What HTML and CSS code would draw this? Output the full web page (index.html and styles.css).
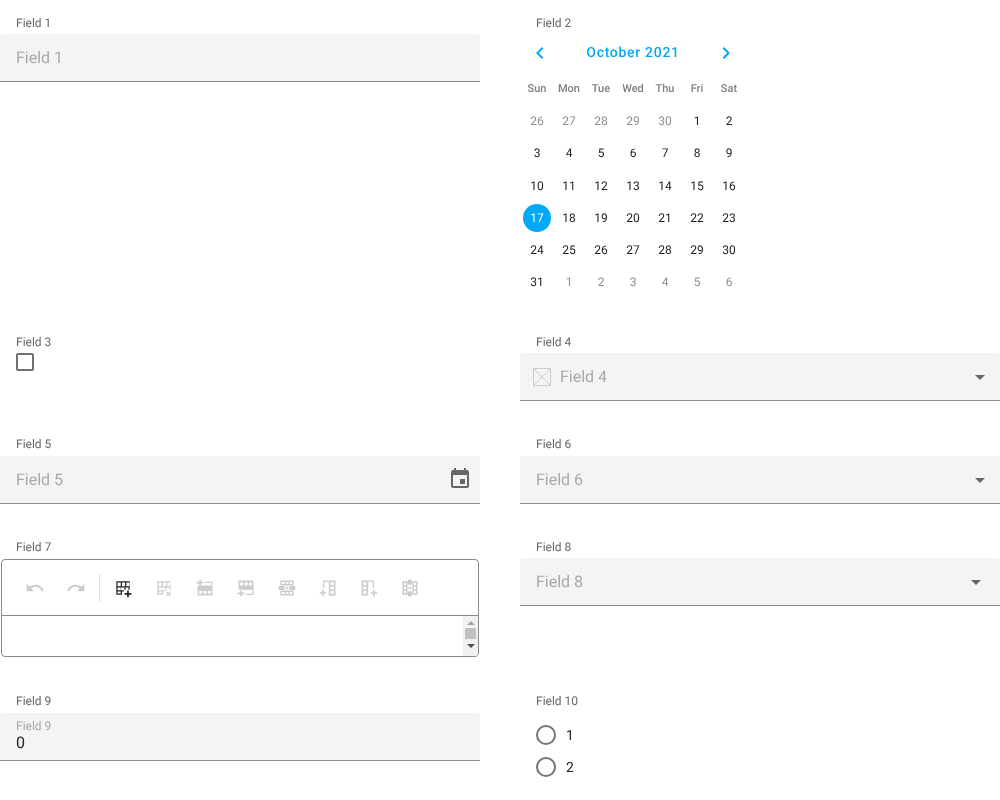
FILE: index.html
```html
<!DOCTYPE html>
<html lang="en">
<head>
  <meta charset="UTF-8">
  <title>Form</title>
  <link rel="stylesheet" href="styles.css">
</head>
<body>
  <main class="form">
    <div class="cell">
      <label class="caption">Field 1</label>
      <div class="input"><span class="placeholder">Field 1</span></div>
    </div>

    <div class="cell">
      <label class="caption">Field 2</label>
      <div class="calendar">
        <div class="cal-head">
          <svg class="chev" width="24" height="24" viewBox="0 0 24 24"><path d="M15.4 7.4 14 6l-6 6 6 6 1.4-1.400L10.800 12z"/></svg>
          <span class="cal-title">October 2021</span>
          <svg class="chev" width="24" height="24" viewBox="0 0 24 24"><path d="M8.600 7.400 10 6l6 6-6 6-1.400-1.400 4.600-4.600z"/></svg>
        </div>
        <div class="cal-grid cal-days">
          <span>Sun</span><span>Mon</span><span>Tue</span><span>Wed</span><span>Thu</span><span>Fri</span><span>Sat</span>
        </div>
        <div class="cal-grid cal-dates">
          <span class="off">26</span><span class="off">27</span><span class="off">28</span><span class="off">29</span><span class="off">30</span><span>1</span><span>2</span>
          <span>3</span><span>4</span><span>5</span><span>6</span><span>7</span><span>8</span><span>9</span>
          <span>10</span><span>11</span><span>12</span><span>13</span><span>14</span><span>15</span><span>16</span>
          <span class="sel">17</span><span>18</span><span>19</span><span>20</span><span>21</span><span>22</span><span>23</span>
          <span>24</span><span>25</span><span>26</span><span>27</span><span>28</span><span>29</span><span>30</span>
          <span>31</span><span class="off">1</span><span class="off">2</span><span class="off">3</span><span class="off">4</span><span class="off">5</span><span class="off">6</span>
        </div>
      </div>
    </div>

    <div class="cell">
      <label class="caption">Field 3</label>
      <div class="checkbox"></div>
    </div>

    <div class="cell">
      <label class="caption">Field 4</label>
      <div class="input">
        <svg class="noimg" width="18" height="18" viewBox="0 0 18 18"><path d="M.5.5h17v17H.5zM.5.5l17 17M17.5.5l-17 17"/></svg>
        <span class="placeholder">Field 4</span>
        <span class="caret"></span>
      </div>
    </div>

    <div class="cell">
      <label class="caption">Field 5</label>
      <div class="input">
        <span class="placeholder">Field 5</span>
        <svg class="date-icon" width="24" height="24" viewBox="0 0 24 24"><path d="M17 12h-5v5h5v-5zM16 1v2H8V1H6v2H5c-1.100 0-2 .9-2 2v14c0 1.100.9 2 2 2h14c1.100 0 2-.9 2-2V5c0-1.100-.9-2-2-2h-1V1h-2zm3 18H5V8h14v11z"/></svg>
      </div>
    </div>

    <div class="cell">
      <label class="caption">Field 6</label>
      <div class="input">
        <span class="placeholder">Field 6</span>
        <span class="caret"></span>
      </div>
    </div>

    <div class="cell">
      <label class="caption">Field 7</label>
      <div class="editor">
        <div class="toolbar">
          <div class="tool-group first">
            <svg class="tool" width="20" height="20" viewBox="0 0 24 24"><path d="M12.500 8c-2.650 0-5.050 1-6.900 2.600L2 7v9h9l-3.620-3.620c1.390-1.160 3.160-1.880 5.120-1.880 3.540 0 6.550 2.310 7.600 5.500l2.370-.78C21.080 11.030 17.150 8 12.500 8z"/></svg>
            <svg class="tool" width="20" height="20" viewBox="0 0 24 24"><path d="M11.500 8c2.650 0 5.050 1 6.900 2.600L22 7v9h-9l3.620-3.620c-1.390-1.160-3.160-1.880-5.120-1.880-3.540 0-6.550 2.310-7.600 5.500l-2.370-.78C2.920 11.030 6.850 8 11.500 8z"/></svg>
          </div>
          <div class="tool-group">
            <svg class="tool on" width="20" height="20" viewBox="0 0 24 24"><path fill-rule="evenodd" d="M4 4h16v10h-1.500v-2.700h-3.400V14h-1.500v-2.700h-3.800v3.400H13v1.500h-2.200V20H4V4zm1.500 1.500v4.300h3.800V5.500H5.500zm5.300 0v4.300h3.800V5.500h-3.800zm5.300 0v4.300h3.400V5.500h-3.400zM5.500 11.300v3.400h3.800v-3.400H5.500zm0 4.900v2.300h3.800v-2.300H5.500z"/><path d="M17 15h2v3h3v2h-3v3h-2v-3h-3v-2h3z"/></svg>
            <svg class="tool" width="20" height="20" viewBox="0 0 24 24"><path fill-rule="evenodd" d="M4 4h16v10h-1.500v-2.700h-3.400V15h-1.500v-3.700h-3.800v3.400H13v1.500h-2.200V20H4V4zm1.500 1.500v4.300h3.800V5.500H5.500zm5.300 0v4.300h3.800V5.500h-3.800zm5.300 0v4.300h3.400V5.500h-3.400zM5.500 11.300v3.400h3.800v-3.400H5.500zm0 4.900v2.300h3.800v-2.300H5.500z"/><path d="m15.500 16 2 2 2-2 1 1-2 2 2 2-1 1-2-2-2 2-1-1 2-2-2-2z"/></svg>
            <svg class="tool" width="20" height="20" viewBox="0 0 24 24"><path fill-rule="evenodd" d="M3 9h18v12H3V9zm2 6.500V19h3.500v-3.500H5zm5.200 0V19h3.600v-3.500h-3.600zm5.300 0V19H19v-3.500h-3.500z"/><path d="M5 2h2v2.500h3v2H7V9H5V6.500H2v-2h3zM12 4.500h9V9h-1.500V6H12z"/></svg>
            <svg class="tool" width="20" height="20" viewBox="0 0 24 24"><path fill-rule="evenodd" d="M3 3h18v11H3V3zm2 2.500V9h3.500V5.500H5zm5.200 0V9h3.600V5.500h-3.600zm5.300 0V9H19V5.500h-3.500z"/><path d="M5 15h2v2.500h3v2H7V22H5v-2.500H2v-2h3zM19.500 14H21v6.500h-9V19h7.500z"/></svg>
            <svg class="tool" width="20" height="20" viewBox="0 0 24 24"><path fill-rule="evenodd" d="M4 3h16v6H4V3zm1.800 1.800v2.400h3.400V4.800H5.800zm4.900 0v2.400h3V4.800h-3zm4.600 0v2.400h3V4.800h-3zM4 15h16v6H4v-6zm1.800 1.800v2.400h3.400v-2.400H5.800zm4.900 0v2.400h3v-2.400h-3zm4.600 0v2.400h3v-2.400h-3z"/><path d="M2 9.500h7v5H2zM15 9.500h7v5h-7zM10.500 10l1.500 1.500 1.500-1.500.7.700-1.500 1.500 1.500 1.500-.7.700-1.500-1.500-1.500 1.500-.7-.7 1.500-1.500-1.500-1.500z"/></svg>
            <svg class="tool" width="20" height="20" viewBox="0 0 24 24"><path fill-rule="evenodd" d="M13 3h8v18h-8V3zm2 2v3.500h4V5h-4zm0 5.200v3.600h4v-3.600h-4zm0 5.300V19h4v-3.500h-4z"/><path d="M6 3h7v1.500H7.500V12H6zM5 14h2v3h3v2H7v3H5v-3H2v-2h3z"/></svg>
            <svg class="tool" width="20" height="20" viewBox="0 0 24 24"><path fill-rule="evenodd" d="M3 3h8v18H3V3zm2 2v3.500h4V5H5zm0 5.200v3.600h4v-3.600H5zm0 5.300V19h4v-3.500H5z"/><path d="M11 3h7v9h-1.500V4.500H11zM17 14h2v3h3v2h-3v3h-2v-3h-3v-2h3z"/></svg>
            <svg class="tool" width="20" height="20" viewBox="0 0 24 24"><path fill-rule="evenodd" d="M3 4h6v16H3V4zm1.800 1.800v2.900h2.400V5.800H4.800zm0 4.700v3h2.400v-3H4.800zm0 4.800v2.900h2.400v-2.900H4.800zM15 4h6v16h-6V4zm1.800 1.800v2.900h2.400V5.800h-2.400zm0 4.700v3h2.400v-3h-2.400zm0 4.800v2.900h2.400v-2.900h-2.400z"/><path d="M9.500 2h5v6h-5zM9.500 16h5v6h-5zM10.500 10l1.500 1 1.500-1 .5.700-1.300 1.300 1.300 1.300-.5.700-1.500-1-1.500 1-.5-.7 1.300-1.300-1.300-1.300z"/></svg>
          </div>
        </div>
        <div class="edit-area">
          <div class="scrollbar">
            <span class="arrow up"></span>
            <span class="thumb"></span>
            <span class="arrow down"></span>
          </div>
        </div>
      </div>
    </div>

    <div class="cell">
      <label class="caption">Field 8</label>
      <div class="input short-caret">
        <span class="placeholder">Field 8</span>
        <span class="caret"></span>
      </div>
    </div>

    <div class="cell">
      <label class="caption">Field 9</label>
      <div class="input filled">
        <span class="mini">Field 9</span>
        <span class="value">0</span>
      </div>
    </div>

    <div class="cell">
      <label class="caption">Field 10</label>
      <div class="radios">
        <div class="radio"><span class="circle"></span>1</div>
        <div class="radio"><span class="circle"></span>2</div>
      </div>
    </div>
  </main>
</body>
</html>
```

FILE: styles.css
```css
:root {
  font-family: Roboto, "Liberation Sans", sans-serif;
  text-rendering: geometricPrecision;
}
body {
  margin: 0;
  background: #fff;
  overflow: hidden;
}
.form {
  display: grid;
  grid-template-columns: 480px 480px;
  grid-template-rows: 319px 102.4px 102.6px 154.3px auto;
  column-gap: 40px;
  padding-top: 16px;
  will-change: transform;
}
.caption {
  display: block;
  height: 18.3px;
  padding-left: 16px;
  font-size: 12px;
  line-height: 14px;
  color: #666;
}
.input {
  display: flex;
  align-items: center;
  height: 47px;
  padding: 0 8px 0 16px;
  background: #f4f4f4;
  border-bottom: 1px solid #8c8c8c;
  border-radius: 4px 4px 0 0;
}
.placeholder {
  flex: 1;
  font-size: 16px;
  color: #a8a8a8;
}
.caret {
  width: 0;
  height: 0;
  margin: 2px 7px 0 0;
  border: 5px solid transparent;
  border-top-color: #666;
  border-bottom-width: 0;
}
.short-caret .caret {
  margin-right: 11px;
}
.noimg {
  margin: 0 9px 0 -3px;
  fill: none;
  stroke: #ccc;
}
.date-icon {
  fill: #666;
}

/* calendar */
.calendar {
  width: 224px;
  padding-left: 1px;
  margin-top: 4px;
}
.cal-head {
  display: flex;
  align-items: center;
  justify-content: space-between;
  height: 30px;
  padding: 0 7px;
}
.chev {
  fill: #03a9f4;
}
.cal-title {
  font-size: 14px;
  font-weight: 500;
  letter-spacing: 0.7px;
  color: #03a9f4;
}
.cal-grid {
  display: grid;
  grid-template-columns: repeat(7, 32px);
  text-align: center;
}
.cal-days {
  margin-top: 13px;
  font-size: 11px;
  font-weight: 500;
  line-height: 16px;
  color: #808080;
}
.cal-dates {
  margin-top: 8.05px;
  grid-auto-rows: 32.1px;
  align-items: center;
  justify-items: center;
  font-size: 12px;
  color: #222;
}
.cal-dates span {
  width: 28px;
  line-height: 28px;
}
.cal-dates .off {
  color: #8f8f8f;
}
.cal-dates .sel {
  background: #03a9f4;
  border-radius: 50%;
  color: #fff;
}

.checkbox {
  width: 14px;
  height: 14px;
  margin-left: 16px;
  border: 2px solid #707070;
  border-radius: 2px;
}

/* editor */
.editor {
  margin: 1px 1px 0;
  height: 96px;
  border: 1px solid #8a8a8a;
  border-radius: 4px;
  overflow: hidden;
}
.toolbar {
  display: flex;
  align-items: center;
  height: 55px;
  border-bottom: 1px solid #8a8a8a;
}
.tool-group {
  display: flex;
  gap: 21px;
  padding-left: 12.6px;
}
.tool-group.first {
  height: 28px;
  align-items: center;
  padding: 0 13px 0 23px;
  border-right: 1px solid #ddd;
}
.tool {
  fill: #ccc;
}
.tool.on {
  fill: #222;
}
.edit-area {
  display: flex;
  justify-content: flex-end;
  height: 40px;
}
.scrollbar {
  display: flex;
  flex-direction: column;
  align-items: center;
  width: 15px;
  background: #f1f1f1;
}
.thumb {
  width: 11px;
  height: 11px;
  margin: 3px 0;
  background: #c1c1c1;
}
.arrow {
  width: 0;
  height: 0;
  border: 4px solid transparent;
}
.arrow.up {
  margin-top: 5px;
  border-top-width: 0;
  border-bottom-color: #a3a3a3;
}
.arrow.down {
  margin-top: 2px;
  border-bottom-width: 0;
  border-top-color: #505050;
}

.filled {
  flex-direction: column;
  align-items: flex-start;
  justify-content: center;
}
.mini {
  font-size: 12px;
  line-height: 14px;
  color: #a8a8a8;
}
.value {
  font-size: 16px;
  line-height: 20px;
  color: #222;
}

.radios {
  padding: 7px 0 0 16px;
}
.radio {
  display: flex;
  align-items: center;
  gap: 10px;
  height: 32px;
  font-size: 14px;
  color: #222;
}
.circle {
  box-sizing: border-box;
  width: 20px;
  height: 20px;
  margin-bottom: 1px;
  border: 2px solid #757575;
  border-radius: 50%;
}
```
